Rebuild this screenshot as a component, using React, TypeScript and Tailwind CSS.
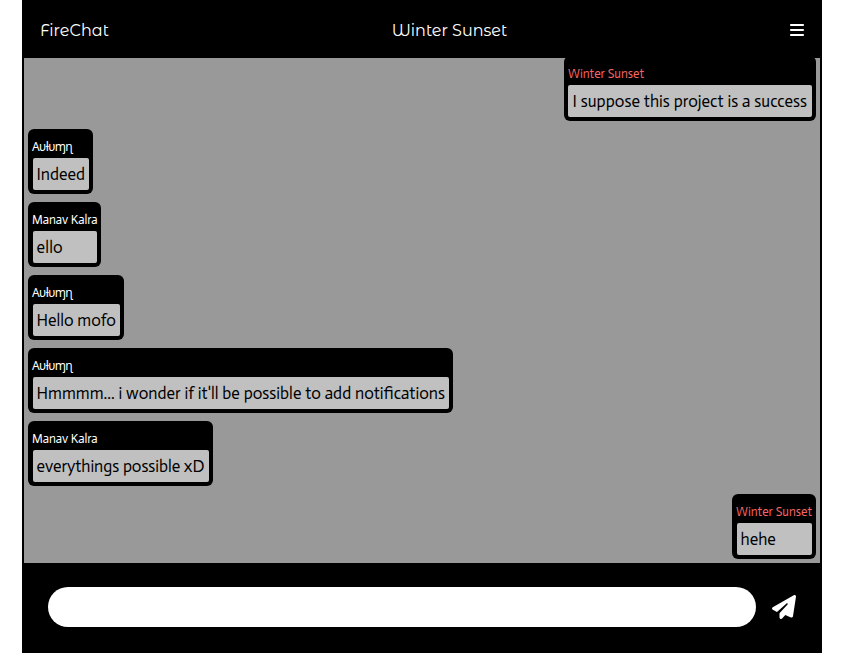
import React from "react";
import { FaBars, FaPaperPlane } from "react-icons/fa6";

type Message = {
  author: string;
  text: string;
  own?: boolean;
  box: string;
  textStyle?: string;
};

const messages: Message[] = [
  { author: "Winter Sunset", text: "I suppose this project is a success", own: true, box: "w-[252px] pl-1", textStyle: "pl-px tracking-[0.02px]" },
  { author: "Aυƚυɱɳ", text: "Indeed", box: "w-[65px] pl-[5px]" },
  { author: "Manav Kalra", text: "ello", box: "w-[73px] pl-[5px]", textStyle: "tracking-[0.2px]" },
  { author: "Aυƚυɱɳ", text: "Hello mofo", box: "w-[96px] pl-[5px]" },
  { author: "Aυƚυɱɳ", text: "Hmmmm... i wonder if it'll be possible to add notifications", box: "w-[425px] pl-[5px]" },
  { author: "Manav Kalra", text: "everythings possible xD", box: "w-[185px] pl-[5px]", textStyle: "tracking-[-0.06px]" },
  { author: "Winter Sunset", text: "hehe", own: true, box: "w-[84px] pl-[5px]" },
];

const nameStyles: Record<string, string> = {
  "Winter Sunset": "",
  "Manav Kalra": "tracking-[-0.08px]",
  "Aυƚυɱɳ": "font-['Noto_Sans',sans-serif] text-[12px] tracking-[-0.6px]",
};

function Bubble({ message }: { message: Message }) {
  const { author, text, own, box, textStyle = "" } = message;
  return (
    <div className={`flex h-[65px] shrink-0 flex-col rounded-md bg-black pr-1 pb-1 ${box} ${own ? "self-end" : "self-start"}`}>
      <div className={`flex h-[29px] shrink-0 items-end whitespace-nowrap pb-[3px] text-[12.6px] leading-[16px] ${text.startsWith("I suppose") ? "" : "-ml-px"} ${own ? "text-[#f56565]" : "text-white"}`}>
        <span className={nameStyles[author]}>{author}</span>
      </div>
      <div className="flex h-8 items-center whitespace-nowrap rounded-xs bg-[#c0c0c0] pl-[3.5px] text-[16.77px] leading-6 text-black">
        <span className={textStyle}>{text}</span>
      </div>
    </div>
  );
}

export default function App() {
  return (
    <div className="min-h-[653px] bg-white font-['Actor','Noto_Sans',sans-serif]">
      <div className="mx-auto flex h-[653px] w-[800px] flex-col bg-black">
        <header className="flex h-[58px] shrink-0 items-center justify-between px-[18px] pt-[3px] font-['Montserrat_Alternates','Inter',sans-serif] text-[16px] text-white">
          <span>FireChat</span>
          <span className="whitespace-nowrap">Winter Sunset</span>
          <FaBars className="mb-px h-4 w-3.5" />
        </header>
        <main className="mx-0.5 flex h-[505px] shrink-0 flex-col justify-end gap-2 overflow-hidden bg-[#999999] p-1">
          {messages.map((message, i) => (
            <Bubble key={i} message={message} />
          ))}
        </main>
        <footer className="flex flex-1 items-center gap-4 pr-[26px] pb-0.5 pl-[26px]">
          <input aria-label="Message" className="h-10 min-w-0 flex-1 rounded-full bg-white px-4 text-black outline-none" />
          <FaPaperPlane className="size-6 text-white" />
        </footer>
      </div>
    </div>
  );
}
